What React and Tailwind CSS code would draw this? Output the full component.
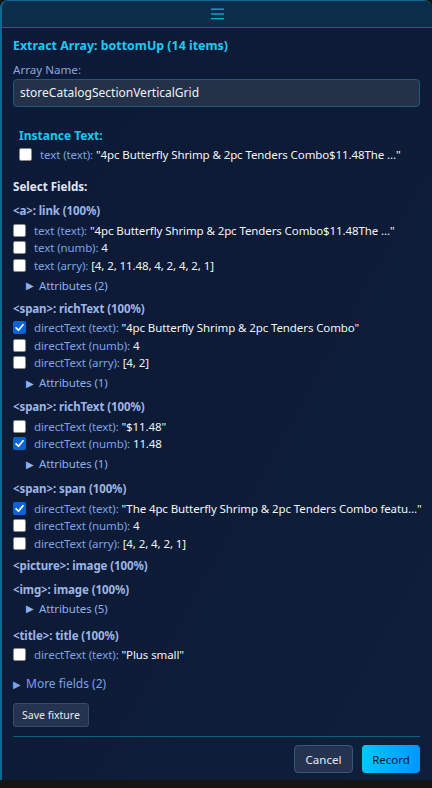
import React from "react";

const F = { fontFamily: '"Noto Sans", "Open Sans", sans-serif' };

function Box({ checked }) {
  if (checked) {
    return (
      <span className="w-[13px] h-[13px] rounded-[2px] bg-[#0b63d6] flex items-center justify-center shrink-0">
        <svg width="11" height="11" viewBox="0 0 12 12">
          <path d="M2.3 6.4 L4.9 9 L9.8 3" fill="none" stroke="#fff" strokeWidth="1.9" strokeLinecap="round" strokeLinejoin="round" />
        </svg>
      </span>
    );
  }
  return <span className="w-[13px] h-[13px] rounded-[2px] bg-white border border-[#8a8a8a] shrink-0" />;
}

function Row({ checked, label, value }) {
  return (
    <div className="h-[17.5px] flex items-center">
      <Box checked={checked} />
      <span className="ml-[8px] text-[11.5px] tracking-[-0.1px] whitespace-nowrap">
        <span className="text-[#7ea2e4]">{label}: </span>
        <span className="text-[#f2f4f8]">{value}</span>
      </span>
    </div>
  );
}

function Attr({ n, tight }) {
  return (
    <div className={`${tight ? "mt-[1px]" : "mt-[3px]"} h-[17px] mb-[2px] pl-[13px] flex items-center text-[11.5px] tracking-[-0.1px] text-[#8db0ec]`}>
      <span className="text-[10px] mr-[5px]">▶</span>Attributes ({n})
    </div>
  );
}

function Group({ title, rows = [], attrs, mb = "mb-[7px]" }) {
  return (
    <div className={mb}>
      <div className="h-[17px] mb-[2px] flex items-center text-[11.5px] tracking-[-0.1px] font-bold text-[#9cb5e6]">{title}</div>
      {rows.map((r, i) => (
        <Row key={i} {...r} />
      ))}
      {attrs != null && <Attr n={attrs} tight={rows.length === 0} />}
    </div>
  );
}

export default function App() {
  return (
    <div className="w-[432px] h-[788px] bg-[#151515] overflow-hidden" style={F}>
      <div className="h-[780px] rounded-t-[8px] border-l-2 border-t border-[#0b6a8f] bg-gradient-to-br from-[#0c1a38] via-[#0d1b36] to-[#0e1f3c] flex flex-col">
        <div className="h-[27px] bg-[#0b2d4a] rounded-tr-[8px] rounded-tl-[7px] border-b border-[#0c6b8e] flex items-center justify-center shrink-0">
          <svg width="13" height="12" viewBox="0 0 13 12">
            <rect x="0" y="0.5" width="13" height="1.4" fill="#11a6cf" />
            <rect x="0" y="5.3" width="13" height="1.4" fill="#11a6cf" />
            <rect x="0" y="10" width="13" height="1.4" fill="#11a6cf" />
          </svg>
        </div>
        <div className="pl-[11px] pr-[12px] pt-[9px] flex flex-col">
          <div className="h-[18px] flex items-center text-[12.4px] font-bold text-[#1fc8f2]">Extract Array: bottomUp (14 items)</div>
          <div className="mt-[7px] h-[16px] flex items-center text-[11.6px] text-[#8ea6d8]">Array Name:</div>
          <div className="mt-[1px] h-[28px] rounded-[4px] bg-[#233149] border border-[#1f5a78] flex items-center px-[6px] text-[12px] text-[#eef1f6]">
            storeCatalogSectionVerticalGrid
          </div>
          <div className="mt-[20px] pl-[6px]">
            <div className="h-[17px] flex items-center text-[12px] font-bold text-[#1ec6f0]">Instance Text:</div>
            <div className="mt-[2px]">
              <Row label="text (text)" value={'"4pc Butterfly Shrimp & 2pc Tenders Combo$11.48The ..."'} />
            </div>
          </div>
          <div className="mt-[15px] h-[17px] flex items-center text-[11.6px] font-bold text-[#e2e7f1]">Select Fields:</div>
          <div className="mt-[7px]">
            <Group
              title="<a>: link (100%)"
              rows={[
                { label: "text (text)", value: '"4pc Butterfly Shrimp & 2pc Tenders Combo$11.48The ..."' },
                { label: "text (numb)", value: "4" },
                { label: "text (arry)", value: "[4, 2, 11.48, 4, 2, 4, 2, 1]" },
              ]}
              attrs={2}
              mb="mb-[6px]"
            />
            <Group
              title="<span>: richText (100%)"
              rows={[
                { checked: true, label: "directText (text)", value: '"4pc Butterfly Shrimp & 2pc Tenders Combo"' },
                { label: "directText (numb)", value: "4" },
                { label: "directText (arry)", value: "[4, 2]" },
              ]}
              attrs={1}
            />
            <Group
              title="<span>: richText (100%)"
              rows={[
                { label: "directText (text)", value: '"$11.48"' },
                { checked: true, label: "directText (numb)", value: "11.48" },
              ]}
              attrs={1}
              mb="mb-[8px]"
            />
            <Group
              title="<span>: span (100%)"
              rows={[
                { checked: true, label: "directText (text)", value: '"The 4pc Butterfly Shrimp & 2pc Tenders Combo featu..."' },
                { label: "directText (numb)", value: "4" },
                { label: "directText (arry)", value: "[4, 2, 4, 2, 1]" },
              ]}
              mb="mb-[5px]"
            />
            <Group title="<picture>: image (100%)" />
            <Group title="<img>: image (100%)" attrs={5} mb="mb-[10px]" />
            <Group title="<title>: title (100%)" rows={[{ label: "directText (text)", value: '"Plus small"' }]} />
          </div>
          <div className="mt-[5px] h-[17px] flex items-center text-[12px] text-[#7ba2e6]">
            <span className="text-[10px] mr-[5px]">▶</span>More fields (2)
          </div>
          <div className="mt-[8px]">
            <button className="h-[24px] px-[8px] rounded-[3px] bg-[#243350] border border-[#3b4a66] text-[10.5px] text-[#e6eaf2]" style={F}>
              Save fixture
            </button>
          </div>
          <div className="mt-[9px] h-px bg-[#0d5f80]" />
          <div className="mt-[8px] flex justify-end gap-[9px]">
            <button className="h-[28px] w-[59px] rounded-[4px] bg-[#253350] border border-[#335a78] text-[11.5px] text-[#e6eaf2]" style={F}>
              Cancel
            </button>
            <button className="h-[28px] w-[58px] rounded-[4px] bg-gradient-to-r from-[#00c6ff] to-[#0096ff] text-[11.5px] text-[#0b1a33]" style={F}>
              Record
            </button>
          </div>
        </div>
      </div>
    </div>
  );
}
